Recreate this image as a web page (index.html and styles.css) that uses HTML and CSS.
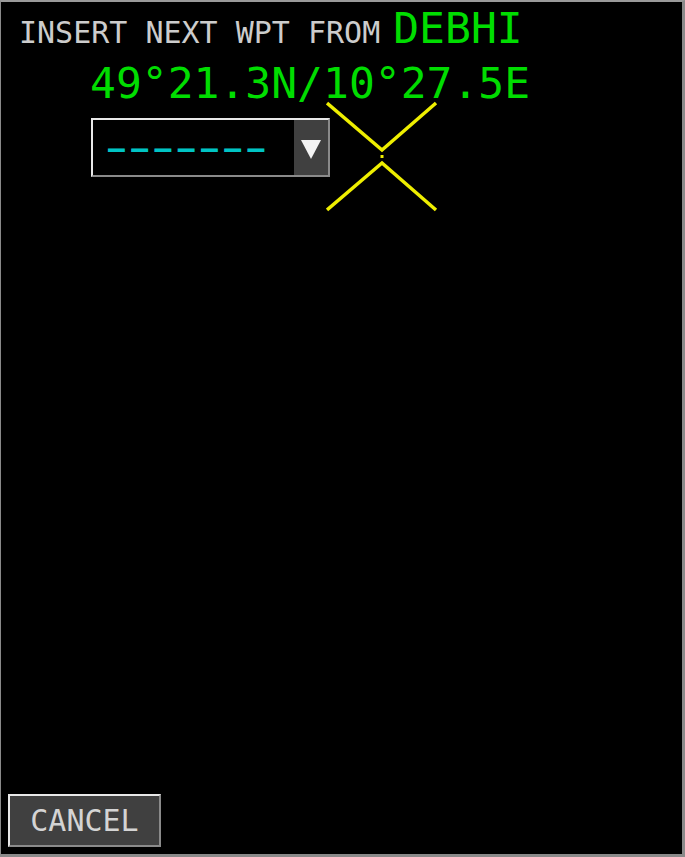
FILE: index.html
```html
<!DOCTYPE html>
<html>
<head>
<meta charset="utf-8">
<link rel="stylesheet" href="styles.css">
</head>
<body>
<div class="screen">
  <div class="title-row">
    <span class="prompt">INSERT NEXT WPT FROM</span>
    <span class="wpt">DEBHI</span>
  </div>
  <div class="coords">49°21.3N/10°27.5E</div>
  <div class="dropdown">
    <div class="field"><span class="dashes">–––––––</span></div>
    <div class="arrow">
      <svg width="22" height="22" viewBox="0 0 22 22"><polygon points="1,3 21,3 11,22" fill="#f4f4f4"/></svg>
    </div>
  </div>
  <svg class="cross" width="114" height="114" viewBox="0 0 114 114">
    <polyline points="1,2 56,49 110,2" fill="none" stroke="#eeee00" stroke-width="3.5"/>
    <polyline points="1,109 56,62 110,109" fill="none" stroke="#eeee00" stroke-width="3.5"/>
    <rect x="54.5" y="54" width="3" height="3" fill="#eeee00"/>
  </svg>
  <div class="footer">
    <button class="cancel">CANCEL</button>
  </div>
</div>
</body>
</html>
```
FILE: styles.css
```css
html, body {
  margin: 0;
  padding: 0;
  background: #000;
}
.screen {
  position: relative;
  box-sizing: border-box;
  width: 685px;
  height: 857px;
  background: #000;
  border-top: 2px solid #9a9a9a;
  border-left: 1px solid #8a8a8a;
  border-right: 3px solid #8a8a8a;
  border-bottom: 3px solid #8a8a8a;
  display: flex;
  flex-direction: column;
  font-family: "DejaVu Sans Mono", "Liberation Mono", monospace;
}
.title-row {
  display: flex;
  align-items: baseline;
  padding: 5px 0 0 18px;
  line-height: 43px;
}
.prompt {
  font-size: 30px;
  color: #cccccc;
}
.wpt {
  font-size: 43px;
  color: #00dd00;
  margin-left: 13px;
}
.coords {
  font-size: 43px;
  line-height: 43px;
  color: #00dd00;
  margin: 8px 0 0 89px;
}
.dropdown {
  box-sizing: border-box;
  display: flex;
  width: 239px;
  height: 59px;
  margin: 13px 0 0 90px;
  border-top: 2px solid #e8e8e8;
  border-left: 2px solid #e8e8e8;
  border-right: 2px solid #8a8a8a;
  border-bottom: 2px solid #8a8a8a;
}
.field {
  flex: 1;
  display: flex;
  align-items: center;
  padding-left: 15px;
  background: #000;
}
.dashes {
  font-size: 28px;
  font-weight: bold;
  letter-spacing: 6.4px;
  color: #00c4c4;
  position: relative;
  top: 1px;
}
.arrow {
  width: 34px;
  background: #404040;
  display: flex;
  align-items: center;
  justify-content: center;
}
.cross {
  position: absolute;
  left: 325px;
  top: 99px;
}
.footer {
  margin-top: auto;
  padding: 0 0 7px 7px;
}
.cancel {
  box-sizing: border-box;
  width: 153px;
  height: 53px;
  background: #404040;
  border-top: 2px solid #e8e8e8;
  border-left: 2px solid #e8e8e8;
  border-right: 2px solid #8a8a8a;
  border-bottom: 2px solid #8a8a8a;
  color: #d4d4d4;
  font-family: "DejaVu Sans Mono", "Liberation Mono", monospace;
  font-size: 30px;
  padding: 0;
  display: block;
}
```
